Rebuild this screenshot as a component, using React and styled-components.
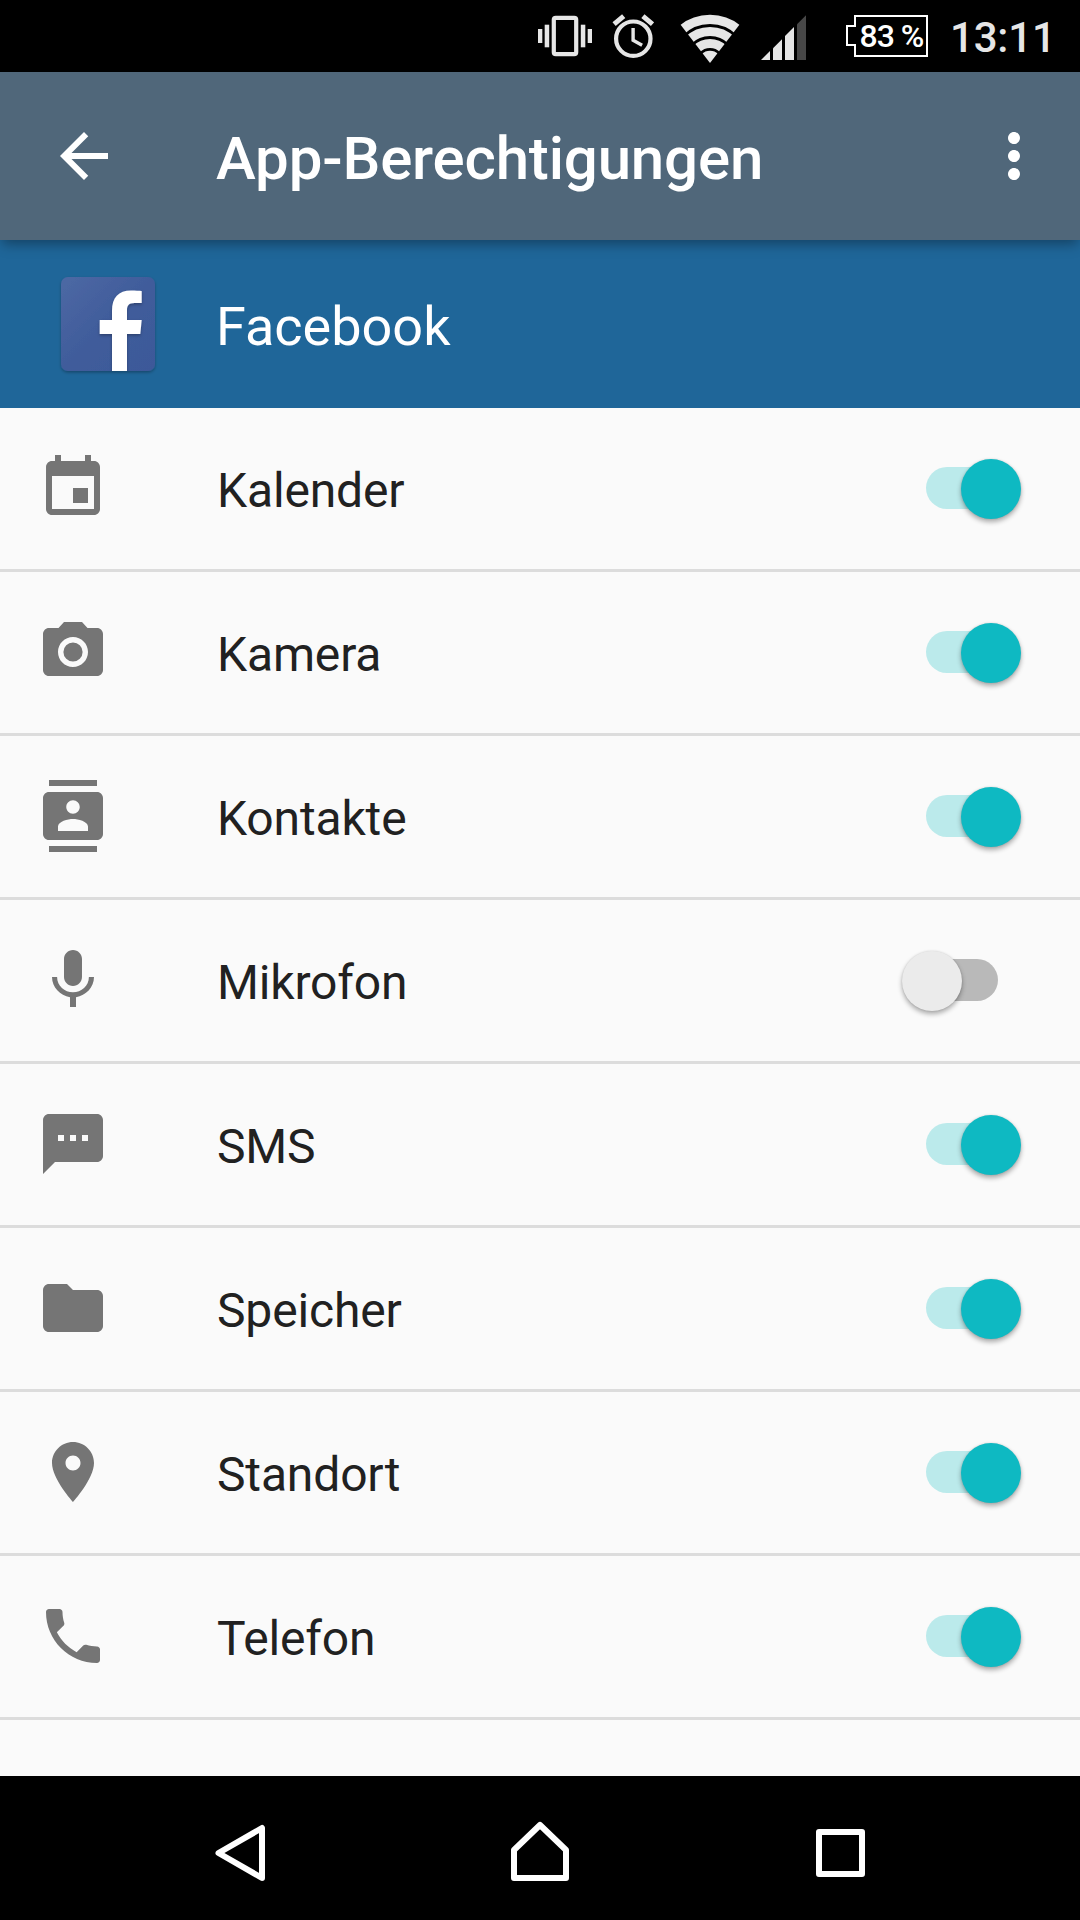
import React from "react";
import styled, { createGlobalStyle } from "styled-components";

const COLORS = {
  statusIcon: "#e6e6e6",
  toolbar: "#50677a",
  appHeader: "#1f6699",
  background: "#fafafa",
  divider: "#dcdcdc",
  icon: "#757575",
  text: "#212121",
  accent: "#0eb9c2",
  accentTrack: "#bbeaeb",
  offThumb: "#ebebeb",
  offTrack: "#b9b9b9",
};

const ICONS = {
  back: "M20 11H7.83l5.59-5.59L12 4l-8 8 8 8 1.41-1.41L7.83 13H20v-2z",
  more: "M12 8c1.1 0 2-.9 2-2s-.9-2-2-2-2 .9-2 2 .9 2 2 2zm0 2c-1.1 0-2 .9-2 2s.9 2 2 2 2-.9 2-2-.9-2-2-2zm0 6c-1.1 0-2 .9-2 2s.9 2 2 2 2-.9 2-2-.9-2-2-2z",
  calendar:
    "M17 12h-5v5h5v-5zM16 1v2H8V1H6v2H5c-1.11 0-1.99.9-1.99 2L3 19c0 1.1.89 2 2 2h14c1.1 0 2-.9 2-2V5c0-1.1-.9-2-2-2h-1V1h-2zm3 18H5V8h14v11z",
  camera:
    "M15.2 12a3.2 3.2 0 1 1-6.4 0 3.2 3.2 0 0 1 6.4 0zM9 2L7.17 4H4c-1.1 0-2 .9-2 2v12c0 1.1.9 2 2 2h16c1.1 0 2-.9 2-2V6c0-1.1-.9-2-2-2h-3.17L15 2H9zm3 15c-2.76 0-5-2.24-5-5s2.24-5 5-5 5 2.24 5 5-2.24 5-5 5z",
  contacts:
    "M20 0H4v2h16V0zM4 24h16v-2H4v2zM20 4H4c-1.1 0-2 .9-2 2v12c0 1.1.9 2 2 2h16c1.1 0 2-.9 2-2V6c0-1.1-.9-2-2-2zm-8 2.75c1.24 0 2.25 1.01 2.25 2.25s-1.01 2.25-2.25 2.25S9.75 10.24 9.75 9 10.76 6.75 12 6.75zM17 17H7v-1.5c0-1.67 3.33-2.5 5-2.5s5 .83 5 2.5V17z",
  mic: "M12 14c1.66 0 2.99-1.34 2.99-3L15 5c0-1.66-1.34-3-3-3S9 3.34 9 5v6c0 1.66 1.34 3 3 3zm5.3-3c0 3-2.54 5.1-5.3 5.1S6.7 14 6.7 11H5c0 3.41 2.72 6.23 6 6.72V21h2v-3.28c3.28-.48 6-3.3 6-6.72h-1.7z",
  sms: "M20 2H4c-1.1 0-1.99.9-1.99 2L2 22l4-4h14c1.1 0 2-.9 2-2V4c0-1.1-.9-2-2-2zM9 11H7V9h2v2zm4 0h-2V9h2v2zm4 0h-2V9h2v2z",
  folder:
    "M10 4H4c-1.1 0-1.99.9-1.99 2L2 18c0 1.1.9 2 2 2h16c1.1 0 2-.9 2-2V8c0-1.1-.9-2-2-2h-8l-2-2z",
  place:
    "M12 2C8.13 2 5 5.13 5 9c0 5.25 7 13 7 13s7-7.75 7-13c0-3.87-3.13-7-7-7zm0 9.5c-1.38 0-2.5-1.12-2.5-2.5s1.12-2.5 2.5-2.5 2.5 1.12 2.5 2.5-1.12 2.5-2.5 2.5z",
  phone:
    "M6.62 10.79c1.44 2.83 3.76 5.14 6.59 6.59l2.2-2.2c.27-.27.67-.36 1.02-.24 1.12.37 2.33.57 3.57.57.55 0 1 .45 1 1V20c0 .55-.45 1-1 1-9.39 0-17-7.61-17-17 0-.55.45-1 1-1h3.5c.55 0 1 .45 1 1 0 1.25.2 2.45.57 3.57.11.35.03.74-.25 1.02l-2.2 2.2z",
};

const PERMISSIONS = [
  { icon: "calendar", label: "Kalender", on: true },
  { icon: "camera", label: "Kamera", on: true },
  { icon: "contacts", label: "Kontakte", on: true },
  { icon: "mic", label: "Mikrofon", on: false },
  { icon: "sms", label: "SMS", on: true },
  { icon: "folder", label: "Speicher", on: true },
  { icon: "place", label: "Standort", on: true },
  { icon: "phone", label: "Telefon", on: true },
];

const Icon = ({ id }) => (
  <svg width="72" height="72" viewBox="0 0 24 24" fill="currentColor">
    <path d={ICONS[id]} />
  </svg>
);

const VibrateIcon = () => (
  <svg width="54" height="72" viewBox="0 0 54 72" fill={COLORS.statusIcon}>
    <rect x="0" y="29" width="4.3" height="14" />
    <rect x="6.7" y="24.7" width="4.5" height="22.6" />
    <rect x="42.8" y="24.7" width="4.5" height="22.6" />
    <rect x="49.7" y="29" width="4.3" height="14" />
    <rect
      x="15.8"
      y="17.8"
      width="22.4"
      height="36.4"
      rx="2"
      fill="none"
      stroke={COLORS.statusIcon}
      strokeWidth="4.2"
    />
  </svg>
);

const AlarmIcon = () => (
  <svg
    width="42"
    height="72"
    viewBox="0 0 42 72"
    fill="none"
    stroke={COLORS.statusIcon}
  >
    <circle cx="21.3" cy="38.7" r="17.2" strokeWidth="4.2" />
    <path d="M21.1 28v12.2l9 5" strokeWidth="3.4" />
    <path d="M2.1 24.2l9.6-8M40.5 24.2l-9.6-8" strokeWidth="5" />
  </svg>
);

const WifiIcon = () => (
  <svg width="60" height="72" viewBox="0 0 60 72">
    <clipPath id="wifi-wedge">
      <path d="M30 63L-1 22.6V0h62v22.6z" />
    </clipPath>
    <g
      clipPath="url(#wifi-wedge)"
      fill="none"
      stroke={COLORS.statusIcon}
      strokeWidth="9.2"
    >
      <circle cx="30" cy="62.6" r="43.2" />
      <circle cx="30" cy="62.6" r="31.1" />
      <circle cx="30" cy="62.6" r="19.1" />
      <circle cx="30" cy="62.6" r="11.8" stroke="none" fill={COLORS.statusIcon} />
    </g>
  </svg>
);

const SignalIcon = () => (
  <svg width="45" height="72" viewBox="0 0 45 72" fill={COLORS.statusIcon}>
    <path d="M0 60l9-9v9z" />
    <path d="M12 60V48.3l9-9V60z" />
    <path d="M24 60V36l9-9v33z" />
    <path d="M36 60V24.3l9-9V60z" fill="#474747" />
  </svg>
);

const BatteryOutline = () => (
  <svg
    width="82"
    height="42"
    viewBox="0 0 82 42"
    fill="none"
    stroke="#fff"
    strokeWidth="2"
  >
    <path d="M9 1H81V41H9V30H1V11H9z" />
  </svg>
);

const AppLogo = () => (
  <svg width="94" height="94" viewBox="0 0 94 94" overflow="visible">
    <defs>
      <linearGradient id="logo-fill" x1="0" y1="0" x2="1" y2="1">
        <stop offset="0" stopColor="#4d69a4" />
        <stop offset="0.5" stopColor="#405c9b" />
        <stop offset="1" stopColor="#3c5999" />
      </linearGradient>
      <filter id="logo-shadow" x="-20%" y="-20%" width="140%" height="140%">
        <feDropShadow dx="0" dy="1.5" stdDeviation="1.5" floodOpacity="0.3" />
      </filter>
      <clipPath id="logo-clip">
        <rect width="94" height="94" rx="7" />
      </clipPath>
    </defs>
    <rect
      width="94"
      height="94"
      rx="7"
      fill="url(#logo-fill)"
      filter="url(#logo-shadow)"
    />
    <g clipPath="url(#logo-clip)">
      <path
        d="M51 95V57H38.7V43H51V34C51 20.500 57.500 13.500 70 13.500C74.500 13.500 78 13.700 80.700 14V26H73.500C67.500 26 66 28.800 66 33V43H80.700L79.300 57H66V95z"
        fill="#fff"
        filter="url(#logo-shadow)"
      />
    </g>
  </svg>
);

const NAV_SHAPES = {
  back: "M58 12V62L14.500 37z",
  home: "M36 9L62 34V62H10V34z",
  recent: "M15 16H58V58H15z",
};

const NavIcon = ({ id }) => (
  <svg
    width="72"
    height="74"
    viewBox="0 0 72 74"
    fill="none"
    stroke="#fff"
    strokeWidth="6"
    strokeLinejoin="round"
  >
    <path d={NAV_SHAPES[id]} />
  </svg>
);

const App = () => {
  return (
    <Screen>
      <GlobalStyle />
      <StatusBar>
        <VibrateIcon />
        <AlarmIcon />
        <WifiIcon />
        <SignalIcon />
        <Battery>
          <BatteryOutline />
          <BatteryLabel>83 %</BatteryLabel>
        </Battery>
        <Clock>13:11</Clock>
      </StatusBar>
      <Toolbar>
        <IconButton aria-label="Zurück">
          <Icon id="back" />
        </IconButton>
        <Title>App-Berechtigungen</Title>
        <IconButton aria-label="Mehr">
          <Icon id="more" />
        </IconButton>
      </Toolbar>
      <AppHeader>
        <AppLogo />
        <AppName>Facebook</AppName>
      </AppHeader>
      <List>
        {PERMISSIONS.map(({ icon, label, on }) => (
          <Row key={label}>
            <Icon id={icon} />
            <Label>{label}</Label>
            <Track $on={on} role="switch" aria-checked={on} aria-label={label}>
              <Thumb $on={on} />
            </Track>
          </Row>
        ))}
      </List>
      <NavBar>
        <NavIcon id="back" />
        <NavIcon id="home" />
        <NavIcon id="recent" />
      </NavBar>
    </Screen>
  );
};

const GlobalStyle = createGlobalStyle`
  *, *::before, *::after {
    box-sizing: border-box;
  }

  body {
    margin: 0;
    background: #000;
  }

  svg {
    display: block;
    flex: none;
  }
`;

const Screen = styled.div`
  display: flex;
  flex-direction: column;
  width: 1080px;
  height: 1920px;
  overflow: hidden;
  background-color: ${COLORS.background};
  font-family: Roboto, sans-serif;
`;

const StatusBar = styled.div`
  flex: none;
  display: flex;
  align-items: center;
  height: 72px;
  padding-left: 538px;
  background-color: #000;

  > svg:nth-of-type(2) {
    margin-left: 20px;
  }

  > svg:nth-of-type(3) {
    margin-left: 26px;
  }

  > svg:nth-of-type(4) {
    margin-left: 21px;
  }
`;

const Battery = styled.div`
  display: grid;
  width: 82px;
  margin-left: 40px;

  > * {
    grid-area: 1 / 1;
  }
`;

const BatteryLabel = styled.span`
  padding-left: 13.5px;
  color: #fff;
  font-size: 32px;
  font-weight: 500;
  line-height: 42px;
  letter-spacing: -1px;
  white-space: nowrap;
`;

const Clock = styled.span`
  margin-left: 22px;
  padding-top: 3px;
  color: ${COLORS.statusIcon};
  font-size: 42px;
  font-weight: 500;
  line-height: 48px;
  letter-spacing: -0.2px;
`;

const Toolbar = styled.header`
  position: relative;
  z-index: 1;
  flex: none;
  display: flex;
  align-items: center;
  height: 168px;
  padding: 0 30px 0 48px;
  background-color: ${COLORS.toolbar};
  box-shadow: 0 6px 12px -2px rgba(0, 0, 0, 0.35);
`;

const IconButton = styled.button`
  flex: none;
  padding: 0;
  border: 0;
  background: none;
  color: #fff;
`;

const Title = styled.h1`
  flex: 1;
  margin: 0;
  padding: 6px 0 0 96px;
  color: #fff;
  font-size: 60px;
  font-weight: 500;
  line-height: 72px;
  letter-spacing: -0.17px;
`;

const AppHeader = styled.div`
  flex: none;
  display: flex;
  align-items: center;
  gap: 61px;
  height: 168px;
  padding-left: 61px;
  background-color: ${COLORS.appHeader};
`;

const AppName = styled.span`
  padding-top: 6px;
  color: #fff;
  font-size: 54px;
  line-height: 64px;
`;

const List = styled.div`
  flex: 1;
`;

const Row = styled.div`
  display: flex;
  align-items: center;
  height: 164px;
  padding: 0 82px 1px 37px;
  border-bottom: 3px solid ${COLORS.divider};
  color: ${COLORS.icon};
`;

const Label = styled.span`
  flex: 1;
  padding: 6px 0 0 108px;
  color: ${COLORS.text};
  font-size: 48px;
  line-height: 56px;
  letter-spacing: -0.15px;
`;

const Track = styled.div`
  display: flex;
  align-items: center;
  justify-content: ${({ $on }) => ($on ? "flex-end" : "flex-start")};
  width: 72px;
  height: 42px;
  border-radius: 21px;
  background-color: ${({ $on }) => ($on ? COLORS.accentTrack : COLORS.offTrack)};
`;

/* the thumb hangs over both ends of the track */
const Thumb = styled.div`
  flex: none;
  width: 60px;
  height: 60px;
  margin: 1px -23px 0 -24px;
  border-radius: 50%;
  background-color: ${({ $on }) => ($on ? COLORS.accent : COLORS.offThumb)};
  box-shadow: 0 3px 5px rgba(0, 0, 0, 0.32), 0 0 2px rgba(0, 0, 0, 0.12);
`;

const NavBar = styled.nav`
  flex: none;
  display: flex;
  justify-content: center;
  gap: 228px;
  height: 144px;
  padding-top: 40px;
  background-color: #000;
`;

export default App;
